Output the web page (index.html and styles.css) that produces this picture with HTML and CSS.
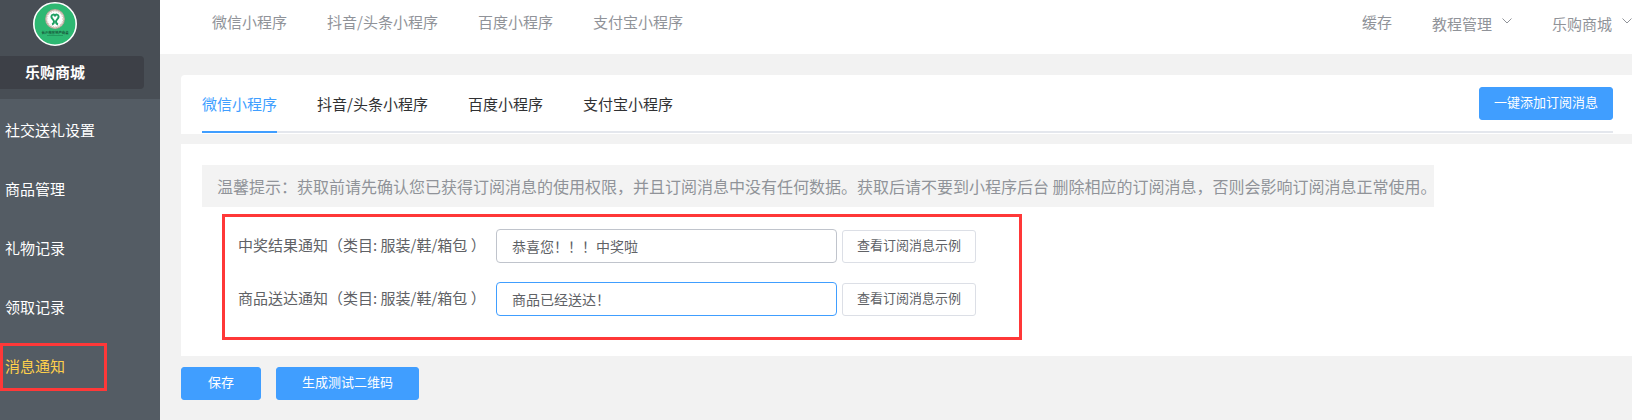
FILE: index.html
```html
<!doctype html>
<html lang="zh-CN">
<head>
    <meta charset="UTF-8">
    <meta name="viewport" content="width=device-width, initial-scale=1.0">
    <title>消息通知</title>
    <link rel="stylesheet" href="styles.css">
</head>
<body>
    <div class="page">
        <aside class="sidebar">
            <div class="shop">
                <svg class="logo" viewBox="0 0 44 44">
                    <circle cx="22" cy="22" r="21.2" fill="#2eb872" stroke="#fff" stroke-width="1.6"/>
                    <circle cx="22" cy="17" r="9.2" fill="#fff" stroke="#b9a79a" stroke-width="1.4"/>
                    <circle cx="22" cy="17" r="8.2" fill="none" stroke="#d8cbc0" stroke-width="2" stroke-dasharray="1 1"/>
                    <path d="M19 22.500c1.500-.5 2-1.500 2-3 0-1.800-2.600-2.500-2.600-4.700 0-2.600 3-3 3.600-.6.6-2.400 3.600-2 3.600.6 0 2.200-2.600 2.900-2.600 4.700 0 1.500.5 2.500 2 3" fill="none" stroke="#1fa063" stroke-width="2"/>
                    <text class="logo-text" x="22" y="31.600" text-anchor="middle">长沙市房地产商会</text>
                    <path d="M14 33.500h16" stroke="#1c8a55" stroke-width=".7"/>
                </svg>
                <h1 class="shop-name">乐购商城</h1>
            </div>
            <ul class="menu">
                <li><a href="#">社交送礼设置</a></li>
                <li><a href="#">商品管理</a></li>
                <li><a href="#">礼物记录</a></li>
                <li><a href="#">领取记录</a></li>
                <li class="marked"><a href="#" class="on">消息通知</a></li>
            </ul>
        </aside>
        <div class="main">
            <header class="header">
                <nav class="nav">
                    <a href="#">微信小程序</a>
                    <a href="#">抖音/头条小程序</a>
                    <a href="#">百度小程序</a>
                    <a href="#">支付宝小程序</a>
                </nav>
                <div class="tools">
                    <a href="#">缓存</a>
                    <button type="button" class="drop">教程管理
                        <svg class="arrow" viewBox="0 0 10 6"><path d="M.5.5L5 5 9.500.5"/></svg>
                    </button>
                    <button type="button" class="drop">乐购商城
                        <svg class="arrow" viewBox="0 0 10 6"><path d="M.5.5L5 5 9.500.5"/></svg>
                    </button>
                </div>
            </header>
            <div class="content">
                <section class="card tab-card">
                    <div class="tabs">
                        <a href="#" class="tab on">微信小程序</a>
                        <a href="#" class="tab">抖音/头条小程序</a>
                        <a href="#" class="tab">百度小程序</a>
                        <a href="#" class="tab">支付宝小程序</a>
                        <button type="button" class="btn primary add">一键添加订阅消息</button>
                    </div>
                </section>
                <section class="card form-card">
                    <p class="tip">温馨提示：获取前请先确认您已获得订阅消息的使用权限，并且订阅消息中没有任何数据。获取后请不要到小程序后台 删除相应的订阅消息，否则会影响订阅消息正常使用。</p>
                    <form class="form">
                        <div class="row">
                            <label for="prize">中奖结果通知（类目: 服装/鞋/箱包 ）</label>
                            <input type="text" id="prize" value="恭喜您！！！中奖啦">
                            <button type="button" class="btn">查看订阅消息示例</button>
                        </div>
                        <div class="row">
                            <label for="arrive">商品送达通知（类目: 服装/鞋/箱包 ）</label>
                            <input type="text" id="arrive" class="current" value="商品已经送达！">
                            <button type="button" class="btn">查看订阅消息示例</button>
                        </div>
                    </form>
                </section>
                <div class="actions">
                    <button type="button" class="btn primary">保存</button>
                    <button type="button" class="btn primary">生成测试二维码</button>
                </div>
            </div>
        </div>
    </div>
</body>
</html>
```
FILE: styles.css
```css
*{
    margin: 0;
    padding: 0;
    box-sizing: border-box;
    list-style: none;
    text-decoration: none;
}
body{
    font: 15px/22px "Noto Sans CJK SC", sans-serif;
    color: #606266;
    background: #f2f2f2;
    overflow-x: hidden;
}
button,input{
    font-family: inherit;
}
.page{
    display: flex;
    min-height: 100vh;
}

/* 左侧菜单 */
.sidebar{
    flex: 0 0 160px;
    background: #545c64;
}
.shop{
    height: 99px;
    padding: 2px 16px 10px 0;
    background: #484e55;
}
.logo{
    display: block;
    width: 44px;
    height: 44px;
    margin: 0 0 10px 33px;
}
.logo-text{
    font-size: 3.4px;
    font-weight: bold;
    fill: #17553a;
}
.shop-name{
    padding: 0 25px 2px;
    border-radius: 0 4px 4px 0;
    font-size: 15px;
    line-height: 31px;
    color: #fff;
    background: #3d4047;
}
.menu{
    padding-top: 8px;
}
.menu li{
    height: 48px;
    margin-bottom: 11px;
    padding: 0 5px;
    line-height: 46px;
}
.menu a{
    color: #fff;
}
.menu a.on{
    color: #ffd04b;
}
.menu .marked{
    width: 107px;
    padding: 0 2px;
    border: 3px solid #ff3838;
    line-height: 40px;
}

/* 顶部 */
.main{
    flex: 1;
    min-width: 0;
}
.header{
    display: flex;
    justify-content: space-between;
    height: 54px;
    padding: 11px 0 0 52px;
    background: #fff;
}
.nav,.tools{
    display: flex;
    align-items: flex-start;
    gap: 40px;
    white-space: nowrap;
}
.header a,.drop{
    color: #909399;
}
.drop{
    display: flex;
    gap: 10px;
    padding-top: 2px;
    border: 0;
    font-size: 15px;
    line-height: 22px;
    background: none;
}
.arrow{
    width: 10px;
    height: 6px;
    margin-top: 5px;
    fill: none;
    stroke: #909399;
}

/* 内容 */
.content{
    padding: 21px 0 20px 21px;
}
.card{
    background: #fff;
}
.tab-card{
    padding: 0 19px 1px 21px;
    border-radius: 4px 0 0 0;
}
.tabs{
    display: flex;
    gap: 40px;
    border-bottom: 2px solid #e4e7ed;
    white-space: nowrap;
}
.tab{
    margin-bottom: -2px;
    padding: 18px 0 16px;
    border-bottom: 2px solid transparent;
    color: #303133;
}
.tab.on{
    color: #409eff;
    border-color: #409eff;
}
.form-card{
    margin-top: 10px;
    padding: 21px 21px 16px;
}
.tip{
    max-width: 1232px;
    padding: 10px 0 10px 15px;
    font-size: 16px;
    white-space: nowrap;
    color: #909399;
    background: #f3f3f3;
}
.form{
    max-width: 800px;
    margin: 7px 0 0 20px;
    padding: 12px 13px 21px;
    border: 3px solid #ff3838;
}
.row{
    display: flex;
    align-items: flex-end;
}
.row + .row{
    margin-top: 19px;
}
.row label{
    width: 258px;
    padding-bottom: 2px;
    line-height: 32px;
    white-space: nowrap;
}
.row input{
    width: 341px;
    height: 34px;
    margin-right: 5px;
    padding: 0 15px 1px;
    border: 1px solid #c0c4cc;
    border-radius: 4px;
    outline: none;
    font-size: 14px;
    color: #606266;
}
.row input.current{
    border-color: #409eff;
}
.btn{
    height: 33px;
    padding: 0 14px 4px;
    border: 1px solid #dcdfe6;
    border-radius: 3px;
    font-size: 13px;
    color: #606266;
    background: #fff;
}
.primary{
    color: #fff;
    border-color: #409eff;
    background: #409eff;
}
.add{
    margin: 12px 0 0 auto;
}
.actions{
    display: flex;
    gap: 15px;
    margin-top: 11px;
}
.actions .btn{
    min-width: 80px;
    padding: 0 25px 4px;
}
```
